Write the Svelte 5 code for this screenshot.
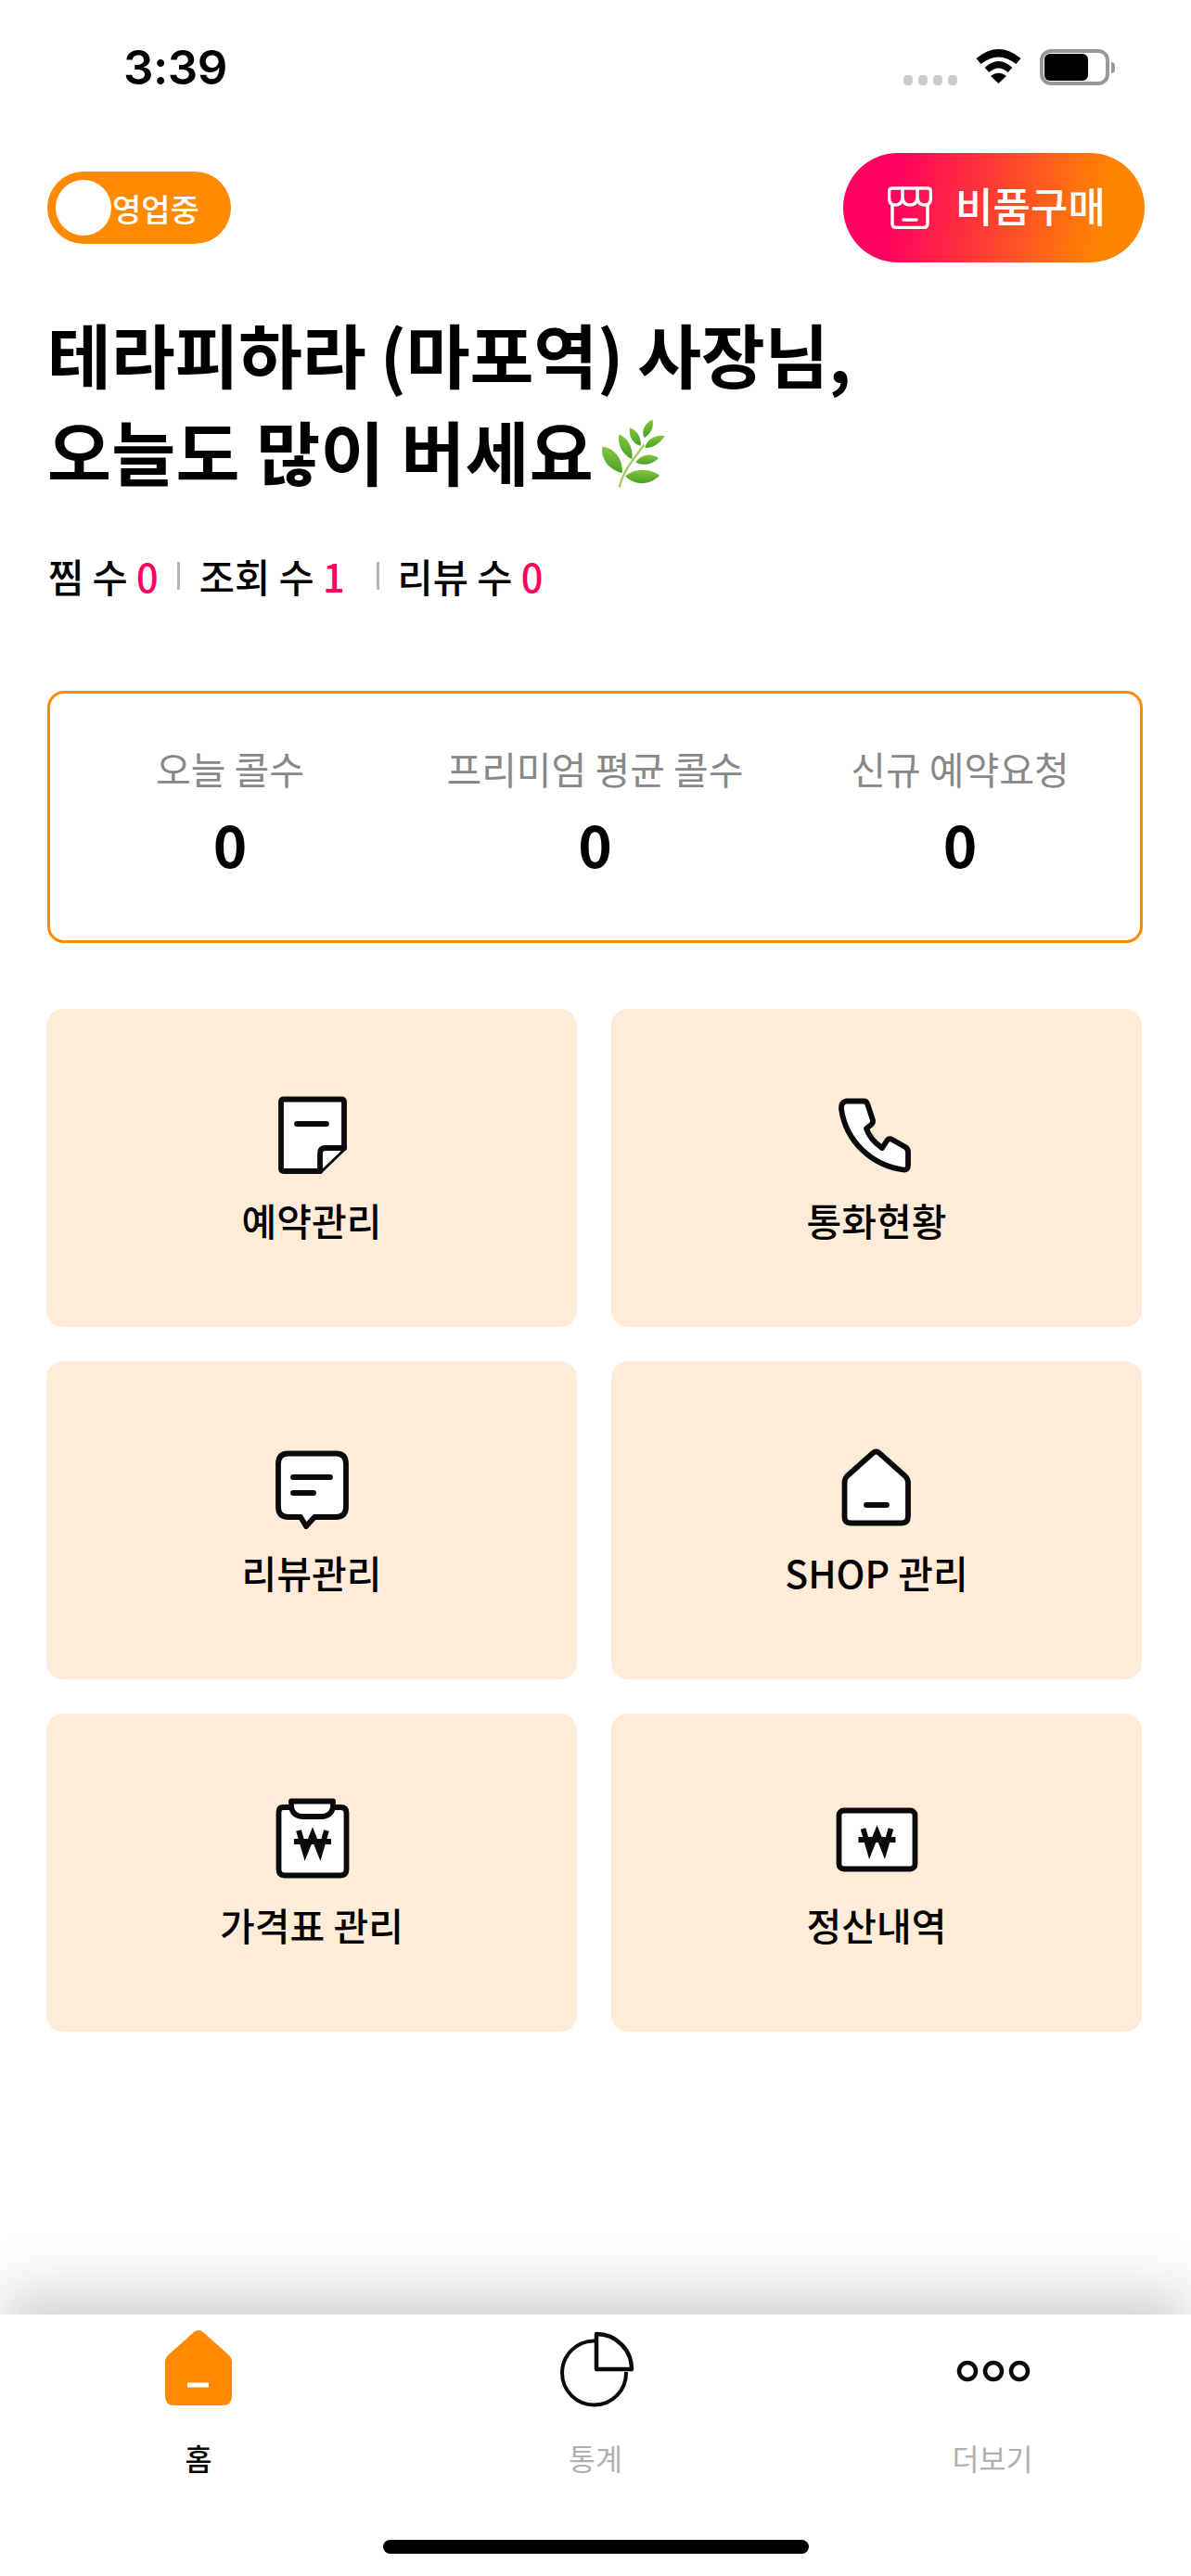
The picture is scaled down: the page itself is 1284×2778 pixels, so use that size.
<script>
  const tiles = [
    { id: 'note', label: '예약관리' },
    { id: 'phone', label: '통화현황' },
    { id: 'chat', label: '리뷰관리' },
    { id: 'home', label: 'SHOP 관리' },
    { id: 'clip', label: '가격표 관리' },
    { id: 'won', label: '정산내역' }
  ];
  const stats = [
    { label: '오늘 콜수', value: 0 },
    { label: '프리미엄 평균 콜수', value: 0 },
    { label: '신규 예약요청', value: 0 }
  ];
</script>

<div class="screen">
  <header class="status">
    <span class="time">3:39</span>
    <div class="sys">
      <div class="signal"><i></i><i></i><i></i><i></i></div>
      <svg class="wifi" viewBox="0 0 51 37" width="51" height="37">
        <path d="M4 13 Q25.5 -4.500 47 13" fill="none" stroke="#000" stroke-width="8" />
        <path d="M13 22.500 Q25.500 11 38 22.500" fill="none" stroke="#000" stroke-width="7" />
        <path d="M17 29 Q25.500 22.500 34 29 L25.500 37Z" fill="#000" />
      </svg>
      <div class="battery"><b></b></div>
      <div class="nub"></div>
    </div>
  </header>

  <main class="main">
    <div class="top">
      <div class="toggle"><span class="knob"></span><span>영업중</span></div>
      <div class="buy">
        <svg viewBox="0 0 48 46" width="48" height="46" fill="none" stroke="#fff" stroke-width="3.500" stroke-linejoin="round" stroke-linecap="round">
          <path d="M5 2 H43 Q46.500 2 46.500 6 V13 Q46 20 40 20 Q33 20 32 13 Q31 20 24 20 Q17 20 16 13 Q15 20 8 20 Q2 20 1.500 13 V6 Q1.500 2 5 2Z" />
          <path d="M16 2 V13 M32 2 V13" />
          <path d="M5 20 V40 Q5 44.500 9.500 44.500 H38.500 Q43 44.500 43 40 V20" />
          <path d="M17 36 H31" />
        </svg>
        <span class="buy-label">비품구매</span>
      </div>
    </div>

    <h1 class="title">
      <span class="line1">테라피하라 (마포역) 사장님,</span><br /><span class="line2">오늘도 많이 버세요</span><svg class="herb" viewBox="80 60 210 230" width="70" height="77">
        <defs>
          <linearGradient id="leaf" x1="0" y1="0" x2="0" y2="1">
            <stop offset="0" stop-color="#86c63c" />
            <stop offset="1" stop-color="#46a128" />
          </linearGradient>
        </defs>
        <path d="M140 283 C150 235 185 195 218 150" fill="none" stroke="#9ccc5a" stroke-width="7" stroke-linecap="round" />
        <g fill="url(#leaf)">
          <path d="M84 155 C122 158 152 195 148 240 C108 230 78 198 84 155Z" />
          <path d="M138 114 C165 125 185 155 180 195 C150 180 132 150 138 114Z" />
          <path d="M173 93 C195 100 212 125 208 152 C183 145 168 120 173 93Z" />
          <path d="M246 67 C253 90 240 115 220 126 C208 105 222 78 246 67Z" />
          <path d="M286 120 C270 145 245 160 222 158 C228 130 258 115 286 120Z" />
          <path d="M266 192 C245 212 215 218 192 205 C208 180 240 172 266 192Z" />
          <path d="M269 248 C240 280 190 282 158 250 C190 222 240 224 269 248Z" />
        </g>
      </svg>
    </h1>

    <div class="counts">
      <span class="c1">찜 수 <em>0</em></span><i class="sep s1"></i>
      <span class="c2">조회 수 <em>1</em></span><i class="sep s2"></i>
      <span class="c3">리뷰 수 <em>0</em></span>
    </div>

    <section class="card">
      {#each stats as s}
        <div class="stat">
          <div class="stat-label">{s.label}</div>
          <div class="stat-value">{s.value}</div>
        </div>
      {/each}
    </section>

    <section class="grid">
      {#each tiles as t}
        <div class="tile">
          <svg viewBox="0 0 90 90" width="90" height="90" fill="#fff" stroke="#0a0a0a" stroke-width="5.800" stroke-linejoin="round" stroke-linecap="round">
            {#if t.id === 'note'}
              <path d="M15 6.500 H77 Q80 6.500 80 9.500 V59 L54 84 H15 Q12 84 12 81 V9.500 Q12 6.500 15 6.500Z" />
              <path d="M54 84 V65 Q54 59 60 59 H80" />
              <path d="M29 33 H61" fill="none" />
            {:else if t.id === 'phone'}
              <path d="M12 8.500 H31 Q34 8.500 35 11 L41 29 Q41.500 32 39 34 L34 38 Q38 50 51 59 L57 50 Q59 48.500 62 50 L76 58 Q79 60 79 63 V78 Q79 83 74 82.500 C40 78 12 52 7 17 Q6.500 10 12 8.500Z" />
            {:else if t.id === 'chat'}
              <path d="M20 8.500 H71 Q82 8.500 82 19.500 V66 Q82 77 71 77 H48 L39 87 L33 77 H20 Q9 77 9 66 V19.500 Q9 8.500 20 8.500Z" />
              <path d="M25 34 H65 M25 51 H47" fill="none" />
            {:else if t.id === 'home'}
              <path d="M41 8 Q44.500 5 48 8 L76 33 Q79 36 79 40 V76 Q79 83.500 72 83.500 H17 Q10.500 83.500 10.500 77 V40 Q10.500 36 13 33Z" />
              <path d="M34 64 H56" fill="none" />
            {:else if t.id === 'clip'}
              <path d="M14 10 H76 Q82.500 10 82.500 16 V77 Q82.500 83.500 76 83.500 H16 Q9.500 83.500 9.500 77 V16 Q9.500 10 14 10Z" />
              <path d="M23 3.500 H68 V10 Q66 20 55 20 H36 Q25 20 23 10Z" />
              <g fill="none" stroke-linecap="butt" transform="translate(46 47)">
                <path d="M-15 -12 L-8 12 L0 -8 L8 12 L15 -12" stroke-linejoin="miter" />
                <path d="M-20 0 H20" />
              </g>
            {:else}
              <rect x="4.500" y="13.500" width="82" height="63" rx="5" />
              <g fill="none" stroke-linecap="butt" transform="translate(45.500 45)">
                <path d="M-15 -12 L-8 12 L0 -8 L8 12 L15 -12" stroke-linejoin="miter" />
                <path d="M-20 0 H20" />
              </g>
            {/if}
          </svg>
          <div class="tile-label">{t.label}</div>
        </div>
      {/each}
    </section>
  </main>

  <nav class="nav">
    <div class="tabs">
      <div class="tab active">
        <svg viewBox="0 0 90 90" width="90" height="90">
          <path d="M40 7 Q45 3 50 7 L78 32 Q81 35 81 40 V76 Q81 86 71 86 H19 Q9 86 9 76 V40 Q9 35 12 32Z" fill="#ff8a00" />
          <path d="M33 64 H56" stroke="#fff" stroke-width="5" />
        </svg>
        <span>홈</span>
      </div>
      <div class="tab">
        <svg viewBox="0 0 90 90" width="90" height="90" fill="none" stroke="#0a0a0a" stroke-width="4">
          <path d="M44 16.500 A34.500 34.500 0 1 0 78 50" />
          <path d="M46 47 V9 A38 38 0 0 1 84 47Z" fill="#fff" stroke-width="4.500" stroke-linejoin="round" />
        </svg>
        <span>통계</span>
      </div>
      <div class="tab">
        <svg viewBox="0 0 90 90" width="90" height="90" fill="none" stroke="#0a0a0a" stroke-width="4.500">
          <circle cx="18" cy="49" r="9" />
          <circle cx="46" cy="49" r="9" />
          <circle cx="74" cy="49" r="9" />
        </svg>
        <span>더보기</span>
      </div>
    </div>
    <div class="indicator"></div>
  </nav>
</div>

<style>
  :global(body) {
    margin: 0;
    background: #fff;
  }
  .screen {
    width: 1284px;
    height: 2778px;
    display: flex;
    flex-direction: column;
    overflow: hidden;
    background: #fff;
    color: #000;
    font-family: "Noto Sans CJK KR", "Noto Sans", sans-serif;
  }
  .status {
    height: 145px;
    display: flex;
    justify-content: space-between;
    box-sizing: border-box;
    padding: 53px 82px 0 133px;
  }
  .time {
    font-family: Inter, "Liberation Sans", sans-serif;
    font-weight: 600;
    font-size: 51px;
    line-height: 40px;
    height: 40px;
    letter-spacing: -0.5px;
  }
  .sys {
    display: flex;
    align-items: flex-start;
    height: 40px;
  }
  .signal {
    display: flex;
    gap: 6px;
    margin-top: 28px;
  }
  .signal i {
    width: 10px;
    height: 11px;
    border-radius: 4px;
    background: #ccc;
  }
  .wifi {
    margin: 0 19px 0 19px;
  }
  .battery {
    box-sizing: border-box;
    width: 75px;
    height: 39px;
    border: 4px solid #999;
    border-radius: 12px;
    padding: 1px;
  }
  .battery b {
    display: block;
    width: 47px;
    height: 29px;
    background: #000;
    border-radius: 6px;
  }
  .nub {
    width: 4px;
    height: 12px;
    margin: 14px 0 0 2px;
    background: #999;
    border-radius: 0 4px 4px 0;
  }
  .main {
    flex: 1;
    padding-top: 20px;
  }
  .top {
    display: flex;
    justify-content: space-between;
    align-items: center;
    padding: 0 50px 0 51px;
  }
  .toggle {
    box-sizing: border-box;
    width: 198px;
    height: 78px;
    border-radius: 39px;
    background: #ff8a00;
    color: #fff;
    display: flex;
    align-items: center;
    padding-left: 9px;
    gap: 1px;
    font-size: 34px;
    font-weight: 500;
  }
  .knob {
    width: 60px;
    height: 60px;
    border-radius: 50%;
    background: #fff;
    flex: none;
  }
  .buy {
    box-sizing: border-box;
    width: 325px;
    height: 118px;
    border-radius: 59px;
    background: linear-gradient(100deg, #ff0060 18%, #ff8500 85%);
    color: #fff;
    display: flex;
    align-items: center;
    padding-left: 48px;
    gap: 25px;
    font-size: 44px;
    font-weight: 500;
  }
  .buy-label {
    margin-top: -6px;
  }
  .title {
    margin: 45px 0 0 51px;
    font-size: 75px;
    line-height: 105px;
    font-weight: 700;
    white-space: nowrap;
  }
  .line1 {
    word-spacing: -1.500px;
    letter-spacing: -0.300px;
  }
  .line2 {
    letter-spacing: 0.300px;
  }
  .herb {
    vertical-align: -9px;
    margin-left: 8px;
  }
  .counts {
    margin: 53px 0 0 52px;
    display: flex;
    align-items: center;
    height: 60px;
    font-size: 41.500px;
    font-weight: 500;
    white-space: nowrap;
  }
  .counts em {
    font-style: normal;
    color: #ff0060;
    font-weight: 500;
  }
  .sep {
    width: 3px;
    height: 30px;
    background: #b5b5b5;
  }
  .s1 { margin: 0 21px 0 20px; }
  .s2 { margin: 0 20px 0 34px; }
  .card {
    box-sizing: border-box;
    margin: 94px 0 0 51px;
    width: 1181px;
    height: 272px;
    border: 3px solid #ff8a00;
    border-radius: 18px;
    display: grid;
    grid-template-columns: repeat(3, 393.500px);
    justify-content: center;
    padding-top: 50px;
  }
  .stat {
    text-align: center;
  }
  .stat-label {
    font-size: 41px;
    line-height: 60px;
    color: #888;
  }
  .stat-value {
    margin-top: 11px;
    font-size: 62px;
    line-height: 80px;
    font-weight: 700;
  }
  .grid {
    margin: 71px 0 0 50px;
    width: 1181px;
    display: grid;
    grid-template-columns: 572px 572px;
    grid-auto-rows: 343px;
    column-gap: 37px;
    row-gap: 37px;
  }
  .tile {
    background: #feecd9;
    border-radius: 18px;
    display: flex;
    flex-direction: column;
    align-items: center;
    padding-top: 91px;
    box-sizing: border-box;
  }
  .tile-label {
    margin-top: 16px;
    font-size: 41px;
    line-height: 60px;
    font-weight: 500;
  }
  .nav {
    position: relative;
    height: 282px;
    background: #fff;
    box-shadow: 0 -28px 56px rgba(0, 0, 0, 0.17);
    display: flex;
    flex-direction: column;
    align-items: center;
  }
  .tabs {
    width: 100%;
    display: grid;
    grid-template-columns: repeat(3, 1fr);
    padding-top: 12px;
  }
  .tab {
    display: flex;
    flex-direction: column;
    align-items: center;
    color: #b0b0b0;
    font-size: 31.500px;
    line-height: 40px;
  }
  .tab span {
    margin-top: 32px;
  }
  .tab.active {
    color: #000;
    font-weight: 500;
  }
  .indicator {
    margin-top: 69px;
    width: 459px;
    height: 15px;
    border-radius: 8px;
    background: #000;
  }
</style>
